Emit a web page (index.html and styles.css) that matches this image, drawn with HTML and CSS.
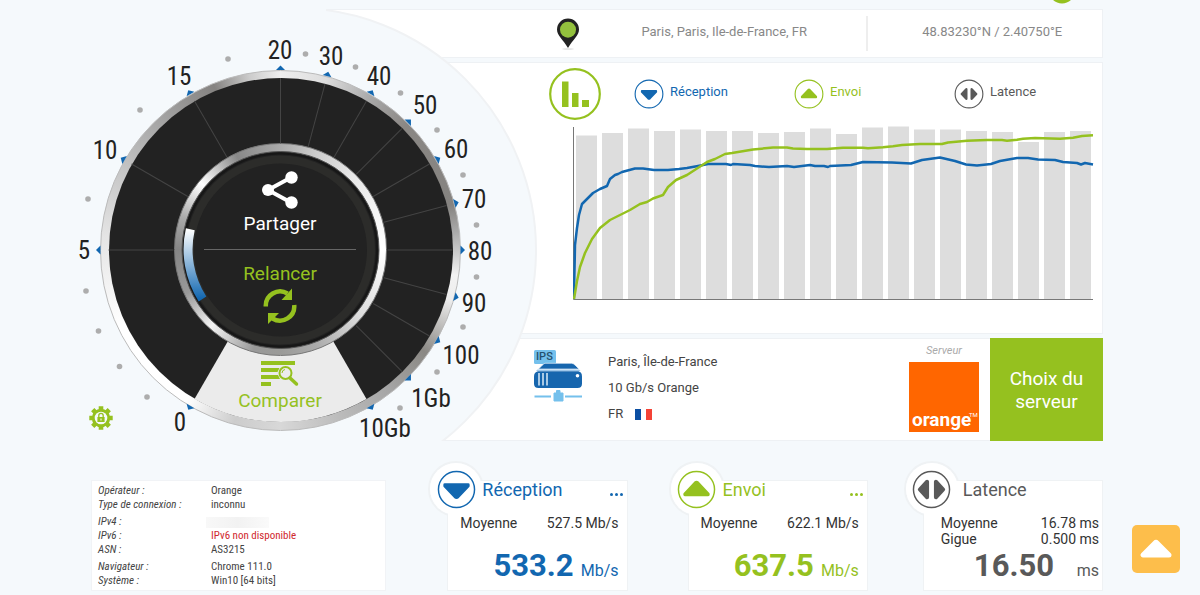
FILE: index.html
```html
<!DOCTYPE html>
<html lang="fr">
<head>
<meta charset="utf-8">
<meta name="viewport" content="width=device-width, initial-scale=1">
<title>Test de débit</title>
<link rel="stylesheet" href="styles.css">
</head>
<body>
<svg width="0" height="0" class="defs" aria-hidden="true">
  <symbol id="disc" viewBox="0 0 40 40"><circle cx="20" cy="20" r="18.5" fill="#fff" stroke="currentColor" stroke-width="1.5"/></symbol>
  <symbol id="down" viewBox="0 0 40 40"><path d="M8 15h24v1.500L21.500 27.500Q20 28.800 18.500 27.500L8 16.500Z" fill="currentColor" stroke="currentColor" stroke-width="3" stroke-linejoin="round"/></symbol>
  <symbol id="up" viewBox="0 0 40 40"><path d="M8 25.500h24v-1L21.200 13Q20 12 18.800 13L8 24.500Z" fill="currentColor" stroke="currentColor" stroke-width="3" stroke-linejoin="round"/></symbol>
  <symbol id="sides" viewBox="0 0 40 40"><path d="M8 20 15.500 12V28ZM32 20l-7.500-8V28Z" fill="currentColor" stroke="currentColor" stroke-width="4" stroke-linejoin="round"/></symbol>
</svg>

<div class="top-strip">
  <svg width="26" height="4" viewBox="0 0 26 4"><circle cx="13" cy="-10" r="13.400" fill="#95c11f"/></svg>
</div>

<main class="page">
  <div class="hero">
    <div class="panels">
      <section class="panel place">
        <svg class="pin" width="24" height="32" viewBox="0 0 24 32"><ellipse cx="12" cy="31" rx="6" ry=".8" fill="#ddd"/><path d="M12 .5A11 11 0 0 0 1 11.500C1 18 7 21 12 30c5-9 11-12 11-18.500A11 11 0 0 0 12 .5Z" fill="#222"/><circle cx="12" cy="11.700" r="8" fill="#93c13d"/></svg>
        <span class="place-name">Paris, Paris, Ile-de-France, FR</span>
        <span class="place-coords">48.83230°N / 2.40750°E</span>
      </section>

      <section class="panel graph">
        <div class="legend">
          <svg class="legend-mark" width="52" height="52" viewBox="0 0 52 52"><circle cx="26" cy="26" r="24.800" fill="#fff" stroke="#95c11f" stroke-width="2.200"/><path d="M13 13.500h6.500v25.500H13zM23 25h6.500v14H23zM33 32h7v7h-7z" fill="#95c11f"/></svg>
          <button class="legend-item blue" type="button"><svg width="30" height="30" viewBox="0 0 40 40"><use href="#disc"/><use href="#down" x="4" y="4" width="32" height="32"/></svg><span>Réception</span></button>
          <button class="legend-item green" type="button"><svg width="30" height="30" viewBox="0 0 40 40"><use href="#disc"/><use href="#up" x="4" y="4" width="32" height="32"/></svg><span>Envoi</span></button>
          <button class="legend-item grey" type="button"><svg width="30" height="30" viewBox="0 0 40 40"><use href="#disc"/><use href="#sides" x="4" y="4" width="32" height="32"/></svg><span>Latence</span></button>
        </div>
        <svg class="chart" viewBox="573 125 521 176" role="img" aria-label="Réception et envoi">
          <g fill="#ddd">
            <path d="M576 135.500h21V299h-21zM602 133h21V299h-21zM628 128.500h21V299h-21zM654 131h21V299h-21zM680 129.500h21V299h-21zM706 131h21V299h-21zM732 131h21V299h-21zM758 133h21V299h-21zM784 132h21V299h-21zM810 128.500h21V299h-21z"/>
            <path d="M836 134h21V299h-21zM862 127.500h21V299h-21zM888 126.500h21V299h-21zM914 129.500h21V299h-21zM940 129.500h21V299h-21zM966 131h21V299h-21zM992 132h21V299h-21zM1018 142h21V299h-21zM1044 132h21V299h-21zM1070 131h21V299h-21z"/>
          </g>
          <path d="M573.500 127V299.500H1093" fill="none" stroke="#777" stroke-width="1"/>
          <g fill="none" stroke-width="2.500" stroke-linejoin="round">
            <polyline stroke="#1267b0" points="574,299 575,245 577,228 579,215 582,204 587,199 593,193 600,189 607,186 610,179 615,175 618,174 622,172 635,168.500 643,168.500 654,170 668,170 679,169 687,168 698,166 708,164 726,164 731,165 733,164 750,165 755,166 769,167 787,166 794,167 810,165 815,166 824,166 828,167 830,166 851,165 863,162 892,162.500 911,163.500 922,160 940,157.500 955,161 966,164.500 977,165.500 991,164 1000,161 1017,158 1028,158 1038,159.500 1055,160 1063,162 1077,163 1081,164.500 1085,163 1093,164.500"/>
            <polyline stroke="#95c11f" points="574,299 577,281 580,267 585,253 592,239 600,228 610,220 620,215 630,210 640,204 647,202 653,198.500 663,195 668,187 676,180 687,175 707,162 715,159 725,154 732,153 753,149.500 773,147.500 787,147.500 793,148.500 807,149 827,149 833,148.500 843,147.700 863,147.700 868,148.300 883,147.300 893,146.300 902,145 920,144 942,144 948,142.500 967,140.700 987,140 1002,140 1007,140.700 1017,139.700 1023,138.700 1035,138 1043,138.300 1060,138.700 1073,137.700 1082,136 1093,135.300"/>
          </g>
        </svg>
      </section>

      <section class="panel server">
        <svg class="server-icon" width="48" height="54" viewBox="534 348 48 54">
          <rect x="534" y="350" width="22" height="14" rx="1.500" fill="#74c0ec"/>
          <text x="536" y="360" class="ips">IPS</text>
          <path d="M545 363.300h26.500q2 .2 3.500 1.700l4 4H538.500l4-4q1.500-1.500 2.500-1.700Z" fill="#1766ae" stroke="#fff" stroke-width=".6"/>
          <path d="M537.500 369.500h41.500l1.500 1.500H536Z" fill="#9fc7ea"/>
          <path d="M538 371.200h40.500q3.500 1 3.500 5v7.300q0 4.500-4.500 4.500h-39q-4.500 0-4.500-4.500v-7.300q0-4 4-5Z" fill="#1766ae"/>
          <path d="M539 373v12.500M543 373v12.500M547 373v12.500" stroke="#dcebf8" stroke-width="1.500"/>
          <circle cx="577.500" cy="375.800" r="1.800" fill="#fff"/>
          <path d="M534.500 396.500h16.500M565 396.500h17" stroke="#74c0ec" stroke-width="2"/>
          <path d="M554 393h2.500v-2.500h3.500V393h3v8h-9Z" fill="#74c0ec" stroke="#74c0ec" stroke-linejoin="round"/>
        </svg>
        <div class="server-text">
          <div>Paris, Île-de-France</div>
          <div>10 Gb/s Orange</div>
          <div class="country">FR <svg width="17" height="11" viewBox="0 0 17 11"><path fill="#0b4ea2" d="M0 0h6v11H0z"/><path fill="#fff" d="M6 0h5v11H6z"/><path fill="#f44336" d="M11 0h6v11h-6z"/></svg></div>
        </div>
        <div class="provider">
          <em>Serveur</em>
          <svg width="70" height="70" viewBox="0 0 70 70"><path fill="#ff6600" d="M0 0h70v70H0z"/><text x="3" y="64" class="brand">orange</text><text x="60" y="55" class="tm">TM</text></svg>
        </div>
        <button class="choose" type="button">Choix du serveur</button>
      </section>
    </div>

    <div class="gauge">
      <div class="ring ring-outer"></div>
      <div class="ring ring-face"></div>
      <svg class="dial" width="466" height="446" viewBox="74 0 466 446">
        <defs>
          <linearGradient id="arc" x1="0" y1="0" x2="0" y2="1"><stop offset="0" stop-color="#fff"/><stop offset=".35" stop-color="#adcbe5"/><stop offset="1" stop-color="#1267b0"/></linearGradient>
          <path id="spoke" d="M280.500 78V143"/>
          <path id="tick" d="M276 70l4.500-4.500 4.500 4.500Z"/>
        </defs>
        <path d="M280.500 250 194.500 399A172 172 0 0 0 366.500 399Z" fill="#ebebeb"/>
        <g stroke="#444" stroke-width="1">
          <use href="#spoke"/><use href="#spoke" transform="rotate(15 280.500 250)"/><use href="#spoke" transform="rotate(30 280.500 250)"/><use href="#spoke" transform="rotate(45 280.500 250)"/><use href="#spoke" transform="rotate(60 280.500 250)"/><use href="#spoke" transform="rotate(75 280.500 250)"/><use href="#spoke" transform="rotate(90 280.500 250)"/><use href="#spoke" transform="rotate(105 280.500 250)"/><use href="#spoke" transform="rotate(120 280.500 250)"/><use href="#spoke" transform="rotate(135 280.500 250)"/><use href="#spoke" transform="rotate(270 280.500 250)"/><use href="#spoke" transform="rotate(300 280.500 250)"/><use href="#spoke" transform="rotate(330 280.500 250)"/>
        </g>
        <g fill="#1267b0">
          <use href="#tick"/><use href="#tick" transform="rotate(15 280.500 250)"/><use href="#tick" transform="rotate(30 280.500 250)"/><use href="#tick" transform="rotate(45 280.500 250)"/><use href="#tick" transform="rotate(60 280.500 250)"/><use href="#tick" transform="rotate(75 280.500 250)"/><use href="#tick" transform="rotate(90 280.500 250)"/><use href="#tick" transform="rotate(105 280.500 250)"/><use href="#tick" transform="rotate(120 280.500 250)"/><use href="#tick" transform="rotate(135 280.500 250)"/><use href="#tick" transform="rotate(150 280.500 250)"/><use href="#tick" transform="rotate(210 280.500 250)"/><use href="#tick" transform="rotate(270 280.500 250)"/><use href="#tick" transform="rotate(300 280.500 250)"/><use href="#tick" transform="rotate(330 280.500 250)"/>
        </g>
        <g fill="#adadad">
          <circle cx="88" cy="199" r="2.800"/><circle cx="140" cy="110" r="2.800"/><circle cx="228" cy="59" r="2.800"/><circle cx="305.500" cy="54" r="2.800"/><circle cx="355.500" cy="67" r="2.800"/><circle cx="400.500" cy="93" r="2.800"/><circle cx="437" cy="130" r="2.800"/><circle cx="463" cy="175" r="2.800"/><circle cx="476.500" cy="225" r="2.800"/><circle cx="476.500" cy="277" r="2.800"/><circle cx="463" cy="327" r="2.800"/><circle cx="437" cy="372" r="2.800"/><circle cx="400" cy="408" r="2.800"/><circle cx="86" cy="291" r="2.800"/><circle cx="98.500" cy="331" r="2.800"/><circle cx="119.500" cy="366.500" r="2.800"/><circle cx="147" cy="397" r="2.800"/>
        </g>
        <g class="scale">
          <text x="180" y="431">0</text><text x="84" y="259">5</text><text x="105" y="159">10</text><text x="179" y="85">15</text><text x="280" y="59">20</text><text x="331" y="65">30</text><text x="379" y="85">40</text><text x="425" y="114">50</text><text x="456" y="158">60</text><text x="474" y="208">70</text><text x="480" y="260">80</text><text x="474" y="312">90</text><text x="461" y="364">100</text><text x="431" y="407">1Gb</text><text x="385" y="437">10Gb</text>
        </g>
      </svg>
      <div class="ring ring-inner"></div>
      <svg class="dial" width="466" height="446" viewBox="74 0 466 446" aria-hidden="true">
        <circle cx="280.500" cy="250" r="98.500" fill="#222" stroke="#555" stroke-width="1"/>
        <circle cx="280.500" cy="250" r="96.500" fill="none" stroke="#171717" stroke-width="2"/>
        <circle cx="280.500" cy="250" r="90.500" fill="none" stroke="#2c2c2a" stroke-width="8"/>
        <path d="M190.300 229.200A92.500 92.500 0 0 0 202.500 299" fill="none" stroke="url(#arc)" stroke-width="9"/>
        <path d="M204 249.500H356" stroke="#666" stroke-width="1"/>
      </svg>
      <div class="actions">
        <button class="action share" type="button">
          <svg width="36" height="38" viewBox="0 0 36 38"><path d="M29 6.500 6 19l23 12.500" fill="none" stroke="#fff" stroke-width="4"/><circle cx="29.500" cy="6.500" r="6.200" fill="#fff"/><circle cx="6" cy="19" r="6" fill="#fff"/><circle cx="29.500" cy="31.500" r="6.200" fill="#fff"/></svg>
          Partager
        </button>
        <button class="action restart" type="button">
          Relancer
          <svg width="34" height="36" viewBox="0 0 34 36"><g fill="none" stroke="#95c11f" stroke-width="4.500"><path d="M2.800 18.500A14.300 14.300 0 0 1 24.500 5.500"/><path d="M31.200 17A14.300 14.300 0 0 1 9.500 30.500"/></g><path d="M29 .5V12H18.500ZM5 36V25H16Z" fill="#95c11f"/></svg>
        </button>
        <button class="action compare" type="button">
          <svg width="38" height="28" viewBox="0 0 38 28"><path d="M0 1h34v4H0zM0 8h18.500l-2 4H0zM0 15h17l2 4H0zM0 22h10v4H0z" fill="#95c11f"/><circle cx="24.500" cy="13" r="6" fill="#ebebeb" stroke="#95c11f" stroke-width="2"/><path d="M29 18l6.500 6" stroke="#95c11f" stroke-width="3.500" stroke-linecap="round"/><path d="M21 13q0-3 3-3.500" fill="none" stroke="#95c11f"/></svg>
          Comparer
        </button>
      </div>
      <button class="settings" type="button" aria-label="Paramètres">
        <svg width="24" height="24" viewBox="-12 -12 24 24"><g fill="#95c11f"><circle r="9.200"/><path id="cog" d="M-2.300-11.700h4.600V11.700h-4.600zM-11.700-2.300h23.400v4.600h-23.400z"/><use href="#cog" transform="rotate(45)"/></g><circle r="6.300" fill="#f5f9fc"/><path d="M-3.600-1h7.200V4h-7.200z" fill="#95c11f"/><path d="M-2.200-1v-1.500a2.200 2.200 0 0 1 4.400 0V-1" fill="none" stroke="#95c11f" stroke-width="1.300"/><path d="M0 .5v2" stroke="#fff"/></svg>
      </button>
    </div>
  </div>

  <div class="results">
    <div class="info">
      <table>
        <tbody><tr><th>Opérateur :</th><td>Orange</td></tr><tr><th>Type de connexion :</th><td>inconnu</td></tr></tbody>
        <tbody><tr><th>IPv4 :</th><td><span class="masked"></span></td></tr><tr><th>IPv6 :</th><td class="missing">IPv6 non disponible</td></tr><tr><th>ASN :</th><td>AS3215</td></tr></tbody>
        <tbody><tr><th>Navigateur :</th><td>Chrome 111.0</td></tr><tr><th>Système :</th><td>Win10 [64 bits]</td></tr></tbody>
      </table>
    </div>

    <section class="stat blue">
      <div class="stat-body">
        <header><h2>Réception</h2><button class="more" type="button" aria-label="Plus"><i></i><i></i><i></i></button></header>
        <dl><dt>Moyenne</dt><dd>527.5 Mb/s</dd></dl>
        <p class="value"><strong>533.2</strong><span>Mb/s</span></p>
      </div>
      <div class="badge"><svg width="39" height="39"><use href="#disc"/><use href="#down"/></svg></div>
    </section>

    <section class="stat green">
      <div class="stat-body">
        <header><h2>Envoi</h2><button class="more" type="button" aria-label="Plus"><i></i><i></i><i></i></button></header>
        <dl><dt>Moyenne</dt><dd>622.1 Mb/s</dd></dl>
        <p class="value"><strong>637.5</strong><span>Mb/s</span></p>
      </div>
      <div class="badge"><svg width="39" height="39"><use href="#disc"/><use href="#up"/></svg></div>
    </section>

    <section class="stat grey latency">
      <div class="stat-body">
        <header><h2>Latence</h2></header>
        <dl><dt>Moyenne</dt><dd>16.78 ms</dd><dt>Gigue</dt><dd>0.500 ms</dd></dl>
        <p class="value"><strong>16.50</strong><span>ms</span></p>
      </div>
      <div class="badge"><svg width="39" height="39"><use href="#disc"/><use href="#sides"/></svg></div>
    </section>
  </div>
</main>

<button class="to-top" type="button" aria-label="Haut de page"><svg width="34" height="22" viewBox="0 0 34 22"><path d="M4 17h26L18 5q-1-1-2 0Z" fill="#fff" stroke="#fff" stroke-width="5" stroke-linejoin="round"/></svg></button>
</body>
</html>
```

FILE: styles.css
```css
*, *::before { box-sizing: border-box; }
body {
  margin: 0;
  background: #f5f9fc;
  color: #444;
  font-family: Roboto, "Liberation Sans", sans-serif;
  font-size: 13px;
}
button {
  margin: 0;
  padding: 0;
  border: 0;
  background: none;
  color: inherit;
  font: inherit;
  cursor: pointer;
}
svg { display: block; }
.defs { position: absolute; }
.blue { color: #1267b0; }
.green { color: #95c11f; }
.grey { color: #595959; }

.top-strip {
  display: flex;
  justify-content: flex-end;
  height: 9px;
  padding-right: 125px;
}
.page { padding: 0 97px 0 74px; }

/* Gauge laid over the left part of the panels */
.hero {
  display: grid;
  grid-template-columns: 252px 214px 1fr;
  margin-top: -9px;
}
.panels {
  grid-area: 1 / 2 / 2 / 4;
  position: relative;
  overflow: hidden;
  display: grid;
  align-content: start;
  gap: 4px;
  padding-top: 9px;
}
.panels::before {
  content: "";
  position: absolute;
  left: -275px;
  top: 7px;
  width: 486px;
  height: 486px;
  border: 2px solid #f0f2f4;
  border-radius: 50%;
  background: #f5f9fc;
  clip-path: inset(0 0 52px 0);
}
.panel {
  background: #fff;
  border: 1px solid #eef1f4;
}

.place {
  display: grid;
  grid-template-columns: 56px 271fr 236fr;
  align-items: center;
  padding-left: 213px;
  height: 49px;
  color: #888;
  text-align: center;
}
.pin { justify-self: center; }
.place-name { padding: 0 14px 4px 0; }
.place-coords {
  padding: 8px 0 12px 14px;
  border-left: 2px solid #eee;
}

.graph { padding: 5px 8px 32px 246px; }
.legend {
  display: flex;
  align-items: center;
  margin-left: -24px;
}
.legend-mark { margin-right: 33px; }
.legend-item {
  flex: 0 1 160px;
  display: flex;
  align-items: center;
  gap: 6px;
}
.legend-item:last-child { flex: none; }
.legend-item span { padding-bottom: 5px; }
.chart { width: 100%; height: auto; margin-top: 5px; }

.server {
  display: grid;
  grid-template-columns: 48px 1fr 70px 123px;
  padding-left: 207px;
}
.server-icon { margin-top: 9px; }
.ips { font: 500 11px Roboto, sans-serif; fill: #24506f; }
.server-text {
  padding: 10px 0 0 26px;
  line-height: 26px;
}
.country { display: flex; align-items: center; gap: 12px; }
.provider {
  text-align: center;
  color: #aaa;
  font-size: 11px;
  line-height: 23px;
}
.brand { font: 700 19px Roboto, sans-serif; fill: #fff; }
.tm { font: 6px Roboto, sans-serif; fill: #fff; }
.choose {
  margin: -1px -1px -1px 11px;
  height: 103px;
  background: #95c11f;
  color: #fff;
  font-size: 19px;
  line-height: 23px;
  padding: 0 15px;
}

.gauge {
  grid-area: 1 / 1 / 2 / 3;
  position: relative;
  display: grid;
  justify-items: start;
  align-items: start;
}
.gauge > .dial, .gauge > .ring, .gauge > .actions { grid-area: 1 / 1; }
.ring { border-radius: 50%; }
.ring-outer {
  width: 361px;
  height: 361px;
  margin: 70px 0 0 26px;
  border: 1px solid #bbb;
  background: conic-gradient(#eee, #ddd 15deg, #aaa 30deg, #8a8784 45deg, #858380 75deg, #aaa 84deg, #f2f2f2 98deg, #eee 106deg, #8a8884 125deg, #a5a5a5 142deg, #bbb 160deg, #d8d8d8 180deg, #ccc 195deg, #fff 212deg, #fff 245deg, #e4e4e4 275deg, #c8c8c8 295deg, #a8a8a8 315deg, #858381 338deg, #ccc 350deg, #eee);
}
.ring-face {
  width: 344px;
  height: 344px;
  margin: 78px 0 0 35px;
  background: #222;
}
.ring-inner {
  width: 213px;
  height: 213px;
  margin: 143px 0 0 100px;
  border: 1px solid #777;
  background: conic-gradient(#aaa, #ccc 20deg, #e8e8e8 45deg, #fff 90deg, #ddd 130deg, #aaa 160deg, #9a9a98 180deg, #999 195deg, #f4f4f4 222deg, #999 245deg, #858585 270deg, #aaa 288deg, #fff 310deg, #888 335deg, #aaa);
}
.scale text {
  font: 400 25px "Roboto Condensed", "Liberation Sans Narrow", Roboto, sans-serif;
  fill: #222;
  text-anchor: middle;
}
.actions {
  display: grid;
  justify-items: center;
  width: 412px;
  padding-top: 171px;
}
.action {
  display: flex;
  flex-direction: column;
  align-items: center;
  font-size: 19px;
  line-height: 24px;
  color: #95c11f;
}
.share { color: #fff; gap: 3px; }
.restart { padding-top: 26px; gap: 2px; }
.compare { padding-top: 36px; gap: 1px; }
.settings {
  position: absolute;
  left: 15px;
  top: 406px;
}

.results {
  display: grid;
  grid-template-columns: 356fr 240fr 235fr 180fr;
  padding: 34px 0 4px 17px;
}
.info {
  margin-right: 61px;
  padding: 3px 0 0 4px;
  border: 1px solid #f1f3f6;
  background: #fff;
}
.info table {
  border-spacing: 0;
  font: 11px/14px "Roboto Condensed", "Liberation Sans Narrow", Roboto, sans-serif;
}
.info th {
  width: 115px;
  padding: 0 2px;
  text-align: left;
  font-style: italic;
  font-weight: 400;
}
.info td { padding: 0; }
.info tbody + tbody tr:first-child > * { padding-top: 3px; }
.info .missing { color: #d0282e; }
.masked {
  display: block;
  width: 63px;
  height: 11px;
  margin-left: -5px;
  background: linear-gradient(90deg, #f8f8f8, #f2f2f2 50%, #fafafa);
}

.stat { --shift: 0px; margin-right: 60px; position: relative; }
.stat:nth-child(3) { margin-right: 55px; }
.stat:last-child { margin-right: 0; }
.stat::before {
  content: "";
  position: absolute;
  left: -19px;
  top: -19px;
  width: 56px;
  height: 56px;
  border: 2px solid #eff2f4;
  border-radius: 50%;
}
.latency { --shift: 5px; }
.stat-body {
  position: relative;
  height: 111px;
  padding: 0 calc(8px - var(--shift)) 0 calc(12px + var(--shift));
  border: 1px solid #eff2f4;
  background: #fff;
}
.badge {
  position: absolute;
  left: -17px;
  top: -17px;
  display: grid;
  place-items: center;
  width: 52px;
  height: 52px;
  border-radius: 50%;
  background: #fff;
}
.stat header {
  display: flex;
  justify-content: space-between;
  padding-left: 22px;
  margin-right: -4px;
}
.stat h2 {
  margin: 0;
  font-size: 18px;
  line-height: 18px;
  font-weight: 400;
}
.more { display: flex; gap: 2px; padding-top: 12px; }
.more i { width: 3px; height: 3px; border-radius: 50%; background: currentColor; }
.stat dl {
  display: grid;
  grid-template-columns: 1fr auto;
  height: 48px;
  margin: 0;
  padding-top: 16px;
  align-content: start;
  color: #333;
  font-size: 14px;
  line-height: 16px;
}
.stat dd { margin: 0; text-align: right; }
.value {
  display: grid;
  grid-template-columns: 1fr 45px;
  align-items: baseline;
  margin: 0;
  text-align: right;
  font-size: 16px;
}
.value strong { font-size: 31px; line-height: 37px; }

.to-top {
  position: fixed;
  right: 20px;
  bottom: 22px;
  display: grid;
  place-items: center;
  width: 48px;
  height: 48px;
  border-radius: 5px;
  background: #fdbe4b;
}
```
